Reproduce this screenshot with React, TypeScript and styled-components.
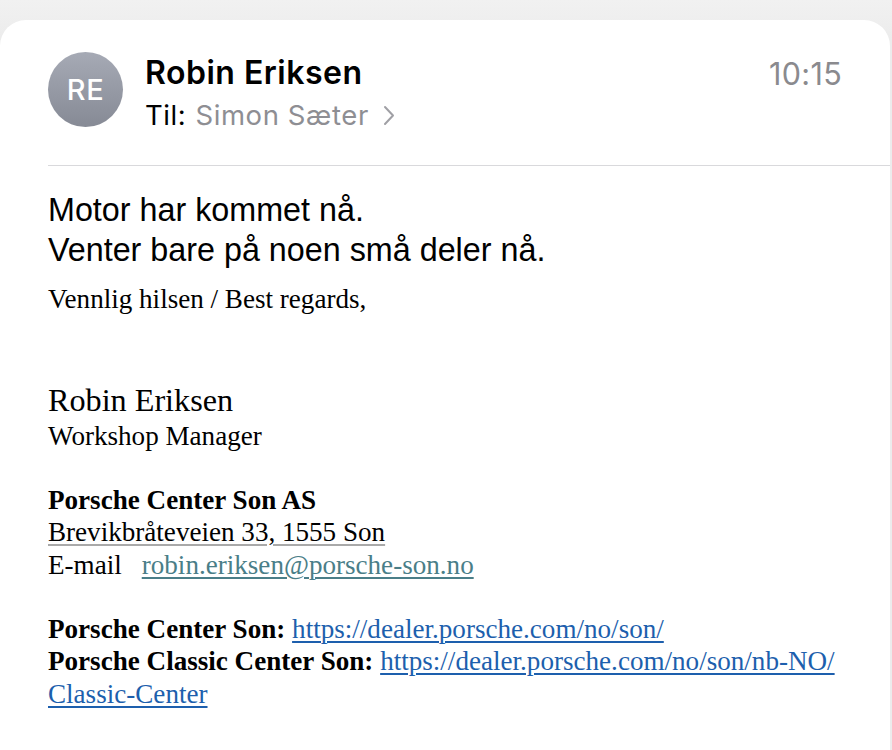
import React from "react";
import styled, { createGlobalStyle } from "styled-components";

const Global = createGlobalStyle`
  html, body { margin: 0; padding: 0; }
  body {
    background: linear-gradient(180deg, #f1f1f1 0px, #ececec 40px);
    width: 892px;
    height: 750px;
    overflow: hidden;
  }
`;

const Page = styled.div`
  padding-top: 20px;
  width: 892px;
`;

const Card = styled.div`
  width: 890px;
  height: 730px;
  background: #ffffff;
  border-radius: 26px 26px 0 0;
  display: flex;
  flex-direction: column;
`;

const Header = styled.div`
  display: flex;
  align-items: flex-start;
  padding: 32px 48px 0 48px;
  height: 145px;
  box-sizing: border-box;
`;

const Avatar = styled.div`
  width: 75px;
  height: 75px;
  border-radius: 50%;
  background: linear-gradient(180deg, #a6aab5 0%, #868a95 100%);
  color: #ffffff;
  display: flex;
  align-items: center;
  justify-content: center;
  font-family: Inter, "Liberation Sans", sans-serif;
  font-size: 29px;
  font-weight: 500;
  letter-spacing: 0.5px;
  flex-shrink: 0;
`;

const HeaderText = styled.div`
  margin-left: 22px;
  flex: 1;
  display: flex;
  flex-direction: column;
  font-family: Inter, "Liberation Sans", sans-serif;
`;

const Name = styled.div`
  font-size: 32px;
  font-weight: 600;
  color: #000;
  line-height: 42px;
  letter-spacing: 0.5px;
`;

const ToLine = styled.div`
  display: flex;
  align-items: center;
  font-size: 27.5px;
  line-height: 34px;
  letter-spacing: 0.6px;
  color: #000;
  margin-top: 4px;
`;

const Recipient = styled.span`
  color: #8e8e93;
  margin-left: 9px;
`;

const Chevron = styled.svg`
  margin-left: 14px;
  width: 12px;
  height: 21px;
`;

const Time = styled.div`
  font-family: Inter, "Liberation Sans", sans-serif;
  font-size: 30.5px;
  letter-spacing: 0.3px;
  color: #8a8a8e;
  line-height: 44px;
`;

const Separator = styled.div`
  margin-left: 48px;
  height: 1px;
  background: #d9d9dc;
`;

const Body = styled.div`
  padding: 24px 48px 0 48px;
`;

const Message = styled.div`
  font-family: "Liberation Sans", Arial, sans-serif;
  font-size: 32.3px;
  line-height: 40px;
  color: #000;
`;

const Signature = styled.div`
  margin-top: 13px;
  font-family: "Liberation Serif", "Times New Roman", serif;
  font-size: 27.1px;
  line-height: 32.4px;
  color: #000;
`;

const Line = styled.div<{ $gapBefore?: number }>`
  margin-top: ${(p) => p.$gapBefore ?? 0}px;
`;

const SigName = styled.div`
  font-size: 32.2px;
  line-height: 40px;
  margin-top: 65px;
`;

const Bold = styled.span`
  font-weight: 700;
`;

const Address = styled.span`
  text-decoration: underline;
  text-decoration-color: #a9a9a9;
  text-decoration-thickness: 1.5px;
  text-underline-offset: 3px;
`;

const MailLabel = styled.span`
  margin-right: 20px;
`;

const Link = styled.a<{ $tone: "teal" | "blue" }>`
  color: ${(p) => (p.$tone === "teal" ? "#4a7e88" : "#1d5fad")};
  text-decoration: underline;
  text-decoration-thickness: 1.5px;
  text-underline-offset: 3px;
`;

export default function App() {
  return (
    <>
      <Global />
      <Page>
        <Card>
          <Header>
            <Avatar>RE</Avatar>
            <HeaderText>
              <Name>Robin Eriksen</Name>
              <ToLine>
                Til:
                <Recipient>Simon Sæter</Recipient>
                <Chevron viewBox="0 0 12 21">
                  <path d="M2 2 L10 10.5 L2 19" fill="none" stroke="#a0a0a5" strokeWidth="2" strokeLinecap="round" strokeLinejoin="round" />
                </Chevron>
              </ToLine>
            </HeaderText>
            <Time>10:15</Time>
          </Header>
          <Separator />
          <Body>
            <Message>
              <div>Motor har kommet nå.</div>
              <div>Venter bare på noen små deler nå.</div>
            </Message>
            <Signature>
              <Line>Vennlig hilsen / Best regards,</Line>
              <SigName>Robin Eriksen</SigName>
              <Line>Workshop Manager</Line>
              <Line $gapBefore={31}>
                <Bold>Porsche Center Son AS</Bold>
              </Line>
              <Line>
                <Address>Brevikbråteveien 33, 1555 Son</Address>
              </Line>
              <Line>
                <MailLabel>E-mail</MailLabel>
                <Link $tone="teal" href="#">robin.eriksen@porsche-son.no</Link>
              </Line>
              <Line $gapBefore={32}>
                <Bold>Porsche Center Son:</Bold>{" "}
                <Link $tone="blue" href="#">https://dealer.porsche.com/no/son/</Link>
              </Line>
              <Line>
                <Bold>Porsche Classic Center Son:</Bold>{" "}
                <Link $tone="blue" href="#">
                  https://dealer.porsche.com/no/son/nb-NO/
                  <br />
                  Classic-Center
                </Link>
              </Line>
            </Signature>
          </Body>
        </Card>
      </Page>
    </>
  );
}
